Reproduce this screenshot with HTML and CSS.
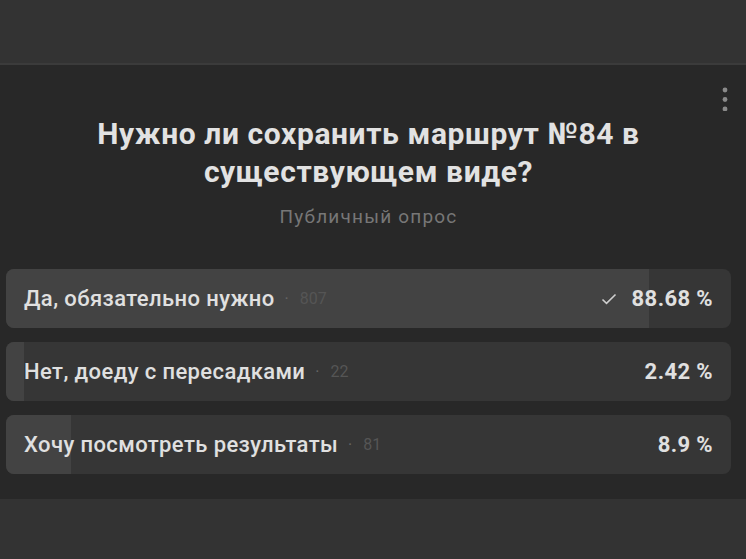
FILE: index.html
```html
<!DOCTYPE html>
<html lang="ru">
<head>
<meta charset="utf-8">
<link rel="stylesheet" href="styles.css">
</head>
<body>
<div class="top"></div>
<section class="poll">
  <button class="more" aria-label="menu">
    <svg width="6" height="24" viewBox="0 0 6 24"><circle cx="3" cy="3" r="2.4" fill="#8a8a8a"/><circle cx="3" cy="12.5" r="2.4" fill="#8a8a8a"/><circle cx="3" cy="22" r="2.4" fill="#8a8a8a"/></svg>
  </button>
  <h1 class="title">Нужно ли сохранить маршрут №84 в<br>существующем виде?</h1>
  <div class="subtitle">Публичный опрос</div>
  <div class="options">
    <div class="option">
      <div class="fill" style="width:88.68%"></div>
      <span class="label">Да, обязательно нужно</span><span class="count"><span class="sep">·</span>807</span>
      <span class="right"><svg class="check" width="16" height="12" viewBox="0 0 16 12"><path d="M1.5 6.5 L5.5 10.3 L14.5 1.5" fill="none" stroke="#cfcfcf" stroke-width="1.6"/></svg><span class="pct">88.68 %</span></span>
    </div>
    <div class="option">
      <div class="fill" style="width:2.42%"></div>
      <span class="label">Нет, доеду с пересадками</span><span class="count"><span class="sep">·</span>22</span>
      <span class="right"><span class="pct">2.42 %</span></span>
    </div>
    <div class="option">
      <div class="fill" style="width:8.9%"></div>
      <span class="label">Хочу посмотреть результаты</span><span class="count"><span class="sep">·</span>81</span>
      <span class="right"><span class="pct">8.9 %</span></span>
    </div>
  </div>
</section>
<div class="bottom"></div>
</body>
</html>
```
FILE: styles.css
```css
html, body {
  margin: 0;
  padding: 0;
  background: #333333;
  font-family: Roboto, "Liberation Sans", sans-serif;
  width: 746px;
  height: 559px;
  overflow: hidden;
}
.top {
  height: 63px;
  background: #333333;
  border-bottom: 2px solid #3b3b3b;
}
.poll {
  position: relative;
  background: #282828;
  height: 434px;
  padding: 0 15px 0 6px;
  box-sizing: border-box;
  display: flex;
  flex-direction: column;
}
.more {
  position: absolute;
  right: 18px;
  top: 22px;
  background: none;
  border: 0;
  padding: 0;
  line-height: 0;
}
.title {
  margin: 50px 0 0;
  text-align: center;
  color: #e2e2e2;
  font-size: 30px;
  line-height: 38px;
  font-weight: 700;
  letter-spacing: 0.6px;
}
.subtitle {
  margin-top: 16px;
  text-align: center;
  color: #777777;
  font-size: 19px;
  line-height: 20px;
  letter-spacing: 1.2px;
}
.options {
  margin-top: 42px;
  display: flex;
  flex-direction: column;
  gap: 14px;
}
.option {
  position: relative;
  height: 59px;
  border-radius: 8px;
  background: #363636;
  overflow: hidden;
  display: flex;
  align-items: center;
  padding: 0 18px 0 18px;
  color: #e0e0e0;
  font-size: 22px;
  font-weight: 500;
  letter-spacing: 0.4px;
}
.fill {
  position: absolute;
  left: 0;
  top: 0;
  bottom: 0;
  background: #434343;
}
.label, .count, .right { position: relative; }
.count {
  margin-left: 10px;
  color: #555555;
  font-size: 16px;
  font-weight: 400;
  letter-spacing: 0;
}
.sep { margin-right: 11px; color: #666666; }
.right {
  margin-left: auto;
  display: flex;
  align-items: center;
  gap: 15px;
}
.pct { font-weight: 700; font-size: 22px; letter-spacing: 0.4px; }
.bottom {
  height: 60px;
  background: #333333;
}
```
